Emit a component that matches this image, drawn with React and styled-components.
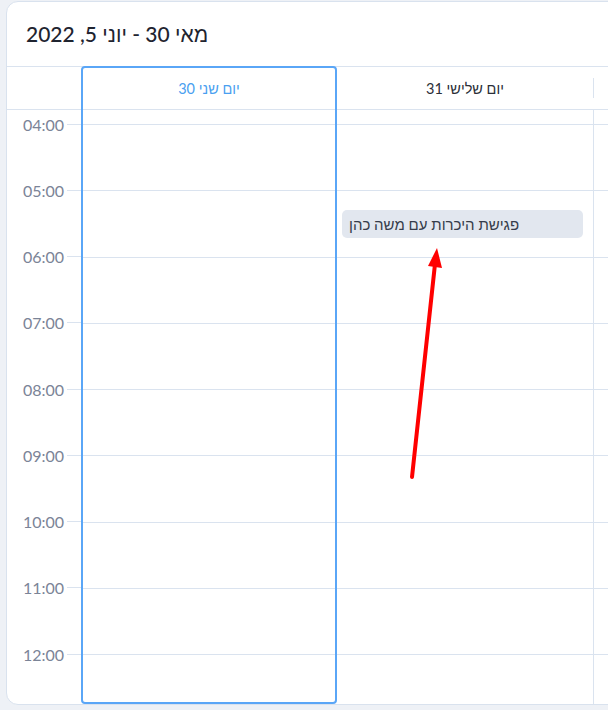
import React from 'react';
import styled, { createGlobalStyle } from 'styled-components';

const LINE = '#dae3ef';

const Global = createGlobalStyle`
  html, body { margin: 0; padding: 0; background: #eef1f6; overflow: hidden; }
  body { font-family: Lato, "Liberation Sans", sans-serif; }
  * { box-sizing: border-box; }
`;

const Page = styled.div`
  position: relative;
  width: 608px;
  height: 710px;
  padding: 1px 0 0 6px;
  overflow: hidden;
`;

const Card = styled.div`
  width: 660px;
  height: 704px;
  background: #fff;
  border: 1px solid #d9e2ee;
  border-radius: 12px 0 0 12px;
  display: flex;
  flex-direction: column;
  overflow: hidden;
`;

const Toolbar = styled.div`
  height: 65px;
  flex: none;
  border-bottom: 1px solid ${LINE};
  display: flex;
  align-items: center;
  padding-left: 19px;
`;

const Title = styled.h2`
  margin: 0;
  font-size: 21px;
  font-weight: 500;
  color: #1f2430;
`;

const Days = styled.div`
  flex: 1;
  min-height: 0;
  display: flex;
`;

const Axis = styled.div`
  width: 74px;
  flex: none;
  display: flex;
  flex-direction: column;
`;

const AxisHeader = styled.div`
  height: 43px;
  flex: none;
  border-bottom: 1px solid ${LINE};
`;

const AxisBody = styled.div`
  flex: 1;
  overflow: hidden;
  padding-top: 4px;
`;

const AxisSlot = styled.div`
  height: 66.25px;
`;

const AxisRow = styled.div`
  height: 20px;
  display: flex;
  align-items: center;
  gap: 3px;
`;

const TimeLabel = styled.span`
  flex: 1;
  text-align: right;
  font-size: 16px;
  color: #7b8497;
`;

const Tick = styled.span`
  width: 14px;
  height: 1px;
  background: ${LINE};
`;

const DayColumn = styled.div`
  position: relative;
  width: ${(p) => p.$width}px;
  flex: ${(p) => (p.$width ? 'none' : '1')};
  display: flex;
  flex-direction: column;
`;

const DayHeader = styled.div`
  height: 43px;
  flex: none;
  border-bottom: 1px solid ${LINE};
  display: flex;
  align-items: center;
`;

const HeaderText = styled.span`
  flex: 1;
  text-align: center;
  font-size: 14.5px;
  color: ${(p) => (p.$active ? '#4a9ff0' : '#2b2f38')};
`;

const Divider = styled.span`
  width: 1px;
  height: 20px;
  background: ${LINE};
`;

const DayBody = styled.div`
  position: relative;
  flex: 1;
  overflow: hidden;
  border-right: ${(p) => (p.$divided ? `1px solid ${LINE}` : 'none')};
`;

const HourList = styled.div`
  margin-top: -51.25px;
`;

const HourRow = styled.div`
  height: 66.25px;
  border-bottom: 1px solid ${LINE};
`;

const Frame = styled.div`
  position: absolute;
  top: -1px;
  left: 0;
  right: 0;
  bottom: 0;
  border: 2px solid #5aa6f7;
  border-radius: 4px;
  pointer-events: none;
`;

const Event = styled.div`
  position: absolute;
  top: 100px;
  left: 5px;
  right: 10px;
  height: 28px;
  padding: 0 7px;
  border-radius: 5px;
  background: #e2e7ef;
  color: #353c4a;
  font-size: 15px;
  line-height: 28px;
  white-space: nowrap;
  overflow: hidden;
`;

const Overlay = styled.svg`
  position: absolute;
  left: 0;
  top: 0;
  pointer-events: none;
`;

const hours = ['04:00', '05:00', '06:00', '07:00', '08:00', '09:00', '10:00', '11:00', '12:00'];
const rows = Array.from({ length: 11 });

function Hours() {
  return (
    <HourList>
      {rows.map((_, i) => (
        <HourRow key={i} />
      ))}
    </HourList>
  );
}

export default function App() {
  return (
    <>
      <Global />
      <Page>
        <Card>
          <Toolbar>
            <Title>מאי 30 - יוני 5, 2022</Title>
          </Toolbar>
          <Days>
            <Axis>
              <AxisHeader />
              <AxisBody>
                {hours.map((h) => (
                  <AxisSlot key={h}>
                    <AxisRow>
                      <TimeLabel>{h}</TimeLabel>
                      <Tick />
                    </AxisRow>
                  </AxisSlot>
                ))}
              </AxisBody>
            </Axis>
            <DayColumn $width={256}>
              <DayHeader>
                <HeaderText $active>יום שני 30</HeaderText>
              </DayHeader>
              <DayBody>
                <Hours />
              </DayBody>
              <Frame />
            </DayColumn>
            <DayColumn $width={257}>
              <DayHeader>
                <HeaderText>יום שלישי 31</HeaderText>
                <Divider />
              </DayHeader>
              <DayBody $divided>
                <Hours />
                <Event>פגישת היכרות עם משה כהן</Event>
              </DayBody>
            </DayColumn>
            <DayColumn>
              <DayHeader />
              <DayBody>
                <Hours />
              </DayBody>
            </DayColumn>
          </Days>
        </Card>
        <Overlay width="608" height="710" viewBox="0 0 608 710">
          <line x1="412" y1="477" x2="435" y2="264" stroke="#ff0000" strokeWidth="4" strokeLinecap="round" />
          <polygon points="437,248 442,268 428,266" fill="#ff0000" />
        </Overlay>
      </Page>
    </>
  );
}
